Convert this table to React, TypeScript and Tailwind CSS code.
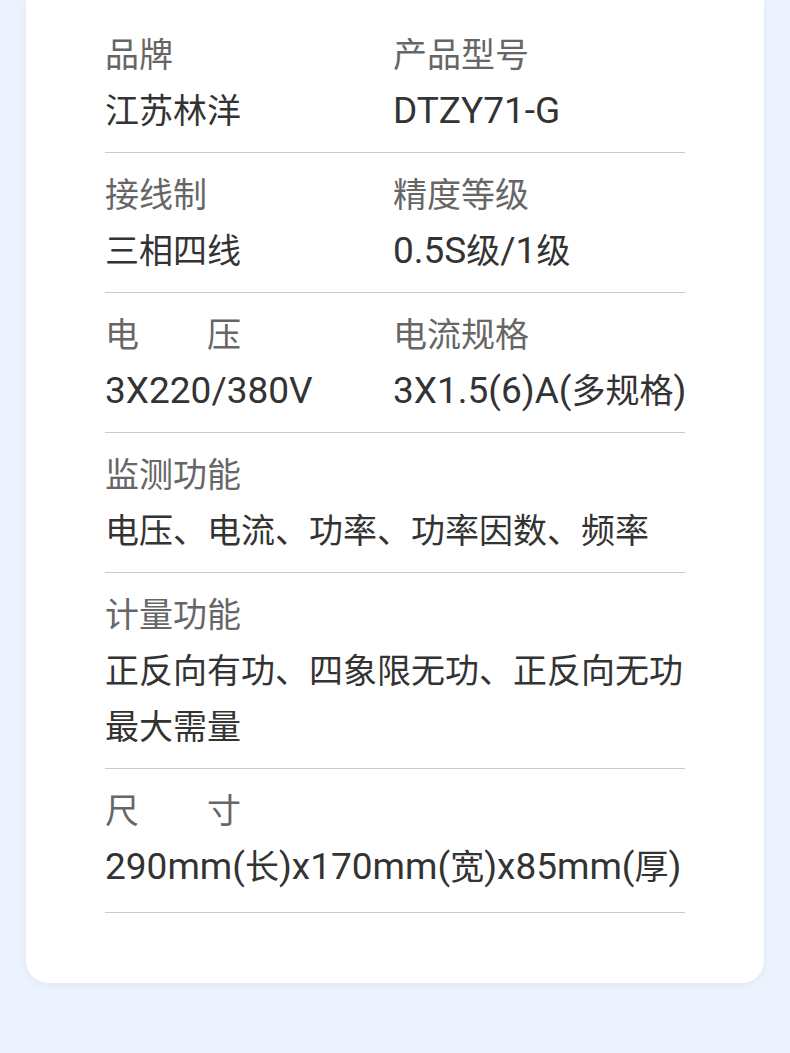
import React from "react";

type Spec = { label: string; value: string[]; label2?: string; value2?: string[] };

const rows: Spec[] = [
  { label: "品牌", value: ["江苏林洋"], label2: "产品型号", value2: ["DTZY71-G"] },
  { label: "接线制", value: ["三相四线"], label2: "精度等级", value2: ["0.5S级/1级"] },
  { label: "电\u3000\u3000压", value: ["3X220/380V"], label2: "电流规格", value2: ["3X1.5(6)A(多规格)"] },
  { label: "监测功能", value: ["电压、电流、功率、功率因数、频率"] },
  { label: "计量功能", value: ["正反向有功、四象限无功、正反向无功", "最大需量"] },
  { label: "尺\u3000\u3000寸", value: ["290mm(长)x170mm(宽)x85mm(厚)"] },
];

// latin runs are set a little bigger so they sit like the CJK glyphs
const Mixed = ({ text }: { text: string }) => (
  <>
    {text.split(/([\u3000-\u9fff]+)/).map((part, i) =>
      /[\u3000-\u9fff]/.test(part) ? (
        <span key={i}>{part}</span>
      ) : part ? (
        <span key={i} className="text-[37px]">
          {part}
        </span>
      ) : null
    )}
  </>
);

const Cell = ({ label, value }: { label: string; value: string[] }) => (
  <div>
    <div className="text-[#666666] leading-[56px] whitespace-pre">{label}</div>
    {value.map((line, i) => (
      <div key={i} className="text-[#333333] h-[56px] leading-[56px] whitespace-nowrap">
        <Mixed text={line} />
      </div>
    ))}
  </div>
);

export default function App() {
  return (
    <div
      className="min-h-[1053px] bg-[#edf3fe] text-[34px]"
      style={{ fontFamily: 'Roboto, "Noto Sans CJK SC", sans-serif' }}
    >
      <div className="mx-[26px] rounded-b-[22px] bg-white px-[79px] pt-[13px] pb-[70px] shadow-[0_2px_6px_rgba(180,195,225,0.25)]">
        {rows.map((r, i) => (
          <div
            key={i}
            className={`border-b border-[#c9c9c9] pt-[14px] ${i === rows.length - 1 ? "pb-[17px]" : "pb-[13px]"} ${
              r.label2 ? "grid grid-cols-[288px_1fr]" : ""
            }`}
          >
            <Cell label={r.label} value={r.value} />
            {r.label2 && r.value2 && <Cell label={r.label2} value={r.value2} />}
          </div>
        ))}
      </div>
    </div>
  );
}
